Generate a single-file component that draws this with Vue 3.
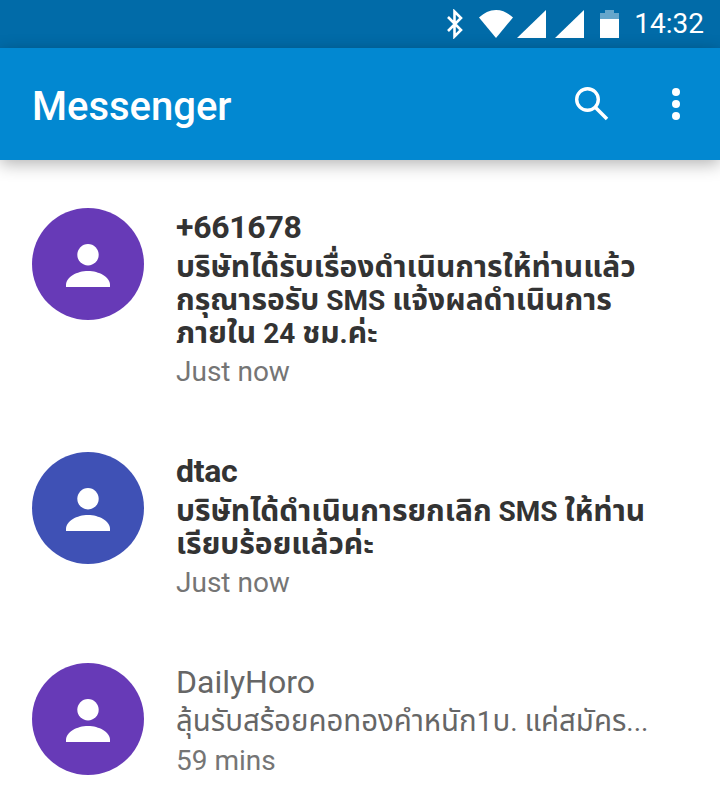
<template>
  <div class="phone">
    <div class="status-bar">
      <svg class="st-icon bt" viewBox="0 0 18 30" width="18" height="30">
        <path d="M2 8l13 13-6.500 6.500v-25L15 9 2 22" fill="none" stroke="#fff" stroke-width="2.600" />
      </svg>
      <svg class="st-icon wifi" viewBox="0 0 34 28" width="34" height="28">
        <path d="M17 28L0 7.500C5 3 10.500 0 17 0s12 3 17 7.500z" fill="#fff" />
      </svg>
      <svg class="st-icon sig" viewBox="0 0 29 28" width="29" height="28">
        <path d="M0 28L29 0v28z" fill="#fff" />
      </svg>
      <svg class="st-icon sig2" viewBox="0 0 29 28" width="29" height="28">
        <path d="M0 28L29 0v28z" fill="#fff" />
      </svg>
      <svg class="st-icon batt" viewBox="0 0 19 28" width="19" height="28">
        <path d="M0 3h5V0h9v3h5v9H0z" fill="#fff" opacity="0.4" />
        <path d="M0 9h19v19H0z" fill="#fff" />
      </svg>
      <span class="clock">14:32</span>
    </div>
    <header class="toolbar">
      <h1 class="toolbar-title">Messenger</h1>
      <svg class="search" viewBox="0 0 34 34" width="34" height="34">
        <circle cx="12.500" cy="12.500" r="10.800" fill="none" stroke="#fff" stroke-width="3.400" />
        <path d="M20.500 20.500L32 32" stroke="#fff" stroke-width="3.600" fill="none" />
      </svg>
      <div class="more">
        <span class="dot"></span>
        <span class="dot"></span>
        <span class="dot"></span>
      </div>
    </header>
    <main class="list">
      <div v-for="m in messages" :key="m.name" class="row" :class="{ unread: m.unread }">
        <div class="avatar" :style="{ background: m.color }">
          <svg viewBox="0 0 44 43" width="44" height="43">
            <circle cx="22" cy="10.700" r="10.700" fill="#fff" />
            <path d="M0 43v-2c0-8 11-14 22-14s22 6 22 14v2z" fill="#fff" />
          </svg>
        </div>
        <div class="body">
          <div class="name">{{ m.name }}</div>
          <div v-for="line in m.lines" :key="line" class="text">
            <span
              v-for="(part, i) in splitRuns(line)"
              :key="i"
              :class="{ latin: isLatin(part) }"
            >{{ part }}</span>
          </div>
          <div class="time">{{ m.time }}</div>
        </div>
      </div>
    </main>
  </div>
</template>

<script setup>
const messages = [
  {
    name: '+661678',
    lines: [
      'บริษัทได้รับเรื่องดำเนินการให้ท่านแล้ว',
      'กรุณารอรับ SMS แจ้งผลดำเนินการ',
      'ภายใน 24 ชม.ค่ะ',
    ],
    time: 'Just now',
    color: '#673ab7',
    unread: true,
  },
  {
    name: 'dtac',
    lines: ['บริษัทได้ดำเนินการยกเลิก SMS ให้ท่าน', 'เรียบร้อยแล้วค่ะ'],
    time: 'Just now',
    color: '#3f51b5',
    unread: true,
  },
  {
    name: 'DailyHoro',
    lines: ['ลุ้นรับสร้อยคอทองคำหนัก1บ. แค่สมัคร...'],
    time: '59 mins',
    color: '#673ab7',
    unread: false,
  },
]

// Thai glyphs run larger than the Roboto ones beside them
const splitRuns = (line) => line.split(/([A-Za-z0-9. ]+)/).filter(Boolean)
const isLatin = (part) => /^[A-Za-z0-9. ]+$/.test(part)
</script>

<style>
html,
body {
  margin: 0;
  background: #fff;
}
</style>

<style scoped>
.phone {
  width: 720px;
  height: 802px;
  overflow: hidden;
  font-family: Roboto, "Noto Sans", "Noto Sans Thai", sans-serif;
  background: #fff;
}

.status-bar {
  height: 48px;
  background: #016ba8;
  display: flex;
  align-items: center;
  justify-content: flex-end;
  padding-right: 16px;
  color: #fff;
}

.st-icon {
  flex: none;
}

.bt {
  margin-right: 15px;
}

.wifi {
  margin-right: 4px;
}

.sig {
  margin-right: 9px;
}

.sig2 {
  margin-right: 16px;
}

.batt {
  margin-right: 15px;
}

.clock {
  font-size: 28px;
  line-height: 48px;
}

.toolbar {
  height: 112px;
  background: #0288d1;
  display: flex;
  align-items: center;
  padding: 0 32px;
  position: relative;
  box-shadow: 0 4px 16px rgba(0, 0, 0, 0.3);
}

.toolbar-title {
  flex: 1;
  margin: 0;
  padding-top: 5px;
  color: #fff;
  font-size: 40px;
  font-weight: 500;
}

.search {
  margin-right: 63px;
}

.more {
  display: flex;
  flex-direction: column;
  gap: 4px;
  margin-right: 8px;
}

.dot {
  width: 8px;
  height: 8px;
  border-radius: 50%;
  background: #fff;
}

.list {
  padding-top: 48px;
}

.row {
  display: flex;
  padding: 0 32px 60px;
}

.avatar {
  flex: none;
  width: 112px;
  height: 112px;
  border-radius: 50%;
  display: flex;
  align-items: center;
  justify-content: center;
  margin-right: 32px;
}

.avatar svg {
  margin-top: 3px;
}

.body {
  flex: 1;
  color: #666;
}

.name {
  font-size: 32px;
  line-height: 38px;
  margin-bottom: 4px;
}

.text {
  height: 33px;
  font-size: 29.400px;
  line-height: 33px;
  white-space: nowrap;
}

.latin {
  font-size: 28px;
}

.time {
  font-size: 28px;
  line-height: 40px;
  margin-top: 3px;
  color: #757575;
}

.unread .name,
.unread .text {
  color: #333;
  font-weight: 700;
}

.unread .name {
  letter-spacing: -0.3px;
}

.unread .text {
  font-size: 30px;
}

.unread .latin {
  font-size: 28px;
}
</style>
